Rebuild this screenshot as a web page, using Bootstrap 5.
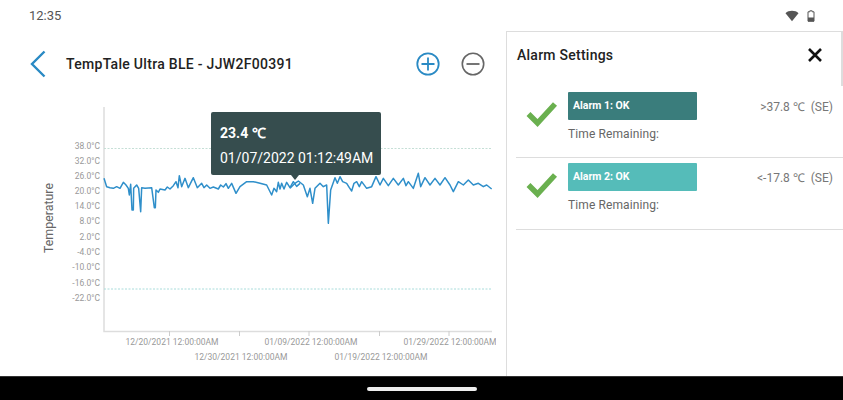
<!DOCTYPE html>
<html lang="en">
<head>
<meta charset="utf-8">
<title>TempTale Ultra BLE</title>
<link href="https://cdn.jsdelivr.net/npm/bootstrap@5.3.0/dist/css/bootstrap.min.css" rel="stylesheet">
<style>
html,body{margin:0;height:400px;overflow:hidden;background:#fff}
body{font-family:Roboto,"Liberation Sans",sans-serif;color:#222}
.screen{width:843px;height:400px}
.statusbar{height:31px;padding:0 28px 0 29px;color:#555;font-size:13px;flex:none}
.statusbar svg{display:block}
.mainrow{height:345px;flex:none}
.chartpane{width:506px;flex:none}
.charthead{height:66px;padding-left:29px;padding-right:21px;flex:none}
.devtitle{font-size:14px;font-weight:500;margin-left:19px;margin-top:1px;color:#222;letter-spacing:.3px}
.zoomset{gap:21px;margin-bottom:1px}
.chartbox{height:279px;position:relative}
.chartbox svg{display:block}
.axisnum{font-size:8.5px;fill:#999;font-family:Roboto,sans-serif}
.axistitle{font-size:12.4px;fill:#666;font-family:Roboto,sans-serif}
.tip{position:absolute;left:211px;top:15px;width:170px;height:63px;background:#364d4e;color:#fff;border-radius:2px;padding:13px 0 0 9px;font-size:14px;line-height:16px;white-space:nowrap}
.tip::after{content:"";position:absolute;left:80px;top:63px;border:4px solid transparent;border-top:5px solid #364d4e;border-bottom:0}
.tipval{font-weight:700;margin-bottom:9px}
.alarmpane{width:337px;flex:none;border-left:1px solid #ddd;border-top:1px solid #ddd;position:relative}
.alarmhead{height:46px;padding:0 20px 0 10px}
.alarmtitle{font-size:14px;font-weight:500;color:#222;letter-spacing:.25px}
.alarmlist{margin-left:9px}
.alarmrow{height:72px;border-bottom:1px solid #ddd;padding:5px 10px 0 10px}
.alarmfirst{height:80px;padding-top:14px}
.alarmtick{width:32px;margin-right:10px;flex:none}
.tickmark{display:block;margin-top:7px}
.alarmbody{width:129px;flex:none}
.alarmtag{height:28px;width:129px;color:#fff;font-size:10.5px;font-weight:700;padding-left:5px;border-radius:1px}
.tagdark{background:#3a7d7c}
.taglight{background:#55bcb9}
.remain{font-size:12px;color:#666;margin-top:7px;line-height:14px;letter-spacing:.1px}
.limit{font-size:12px;color:#777;line-height:28px;margin-left:auto;margin-top:1px;white-space:pre}
.thumbbar{position:absolute;right:0;top:0;width:2px;height:54px;background:#ddd}
.navstrip{height:24px;background:#000;flex:none;border-top:1px solid #333}
.navpill{width:110px;height:4px;background:#eee;border-radius:2px}
</style>
</head>
<body>
<div class="screen d-flex flex-column">
  <div class="statusbar d-flex align-items-center justify-content-between">
    <span>12:35</span>
    <div class="d-flex align-items-center gap-2">
      <svg width="14" height="12" viewBox="0 0 14 12"><path d="M0.5 3.2C2.2 1.6 4.5.8 7 .8s4.8.8 6.5 2.4L7 11.2z" fill="#555"/></svg>
      <svg width="8" height="12" viewBox="0 0 8 12"><path d="M2.8.8h2.4v1H7v9.4H1V1.800h1.800z" fill="none" stroke="#555" stroke-width="1"/><rect x="1" y="7.500" width="6" height="4" fill="#555"/></svg>
    </div>
  </div>
  <div class="mainrow d-flex">
    <div class="chartpane d-flex flex-column">
      <div class="charthead d-flex align-items-center">
        <svg width="18" height="28" viewBox="0 0 18 28"><path d="M15.500 1.500 3 14l12.500 12.500" fill="none" stroke="#2a8ac4" stroke-width="2.400"/></svg>
        <span class="devtitle">TempTale Ultra BLE - JJW2F00391</span>
        <div class="ms-auto d-flex zoomset align-items-center">
          <svg width="24" height="24" viewBox="0 0 24 24"><circle cx="12" cy="12" r="10.700" fill="none" stroke="#2a8ac4" stroke-width="1.800"/><path d="M5.500 12h13M12 5.500v13" stroke="#2a8ac4" stroke-width="1.800"/></svg>
          <svg width="24" height="24" viewBox="0 0 24 24"><circle cx="12" cy="12" r="10.700" fill="none" stroke="#666" stroke-width="1.600"/><path d="M5.500 12h13" stroke="#666" stroke-width="1.800"/></svg>
        </div>
      </div>
      <div class="chartbox">
        <svg width="506" height="279" viewBox="0 97 506 279">
          <text class="axistitle" transform="translate(53 218) rotate(-90)" text-anchor="middle">Temperature</text>
          <g text-anchor="end">
            <text class="axisnum" x="100" y="149">38.0°C</text>
            <text class="axisnum" x="100" y="164">32.0°C</text>
            <text class="axisnum" x="100" y="179">26.0°C</text>
            <text class="axisnum" x="100" y="194">20.0°C</text>
            <text class="axisnum" x="100" y="209">14.0°C</text>
            <text class="axisnum" x="100" y="224">8.0°C</text>
            <text class="axisnum" x="100" y="240">2.0°C</text>
            <text class="axisnum" x="100" y="255">-4.0°C</text>
            <text class="axisnum" x="100" y="270">-10.0°C</text>
            <text class="axisnum" x="100" y="286">-16.0°C</text>
            <text class="axisnum" x="100" y="301">-22.0°C</text>
          </g>
          <path d="M104 107V331.500H492" fill="none" stroke="#ddd" stroke-width="1.500"/>
          <path d="M169.500 331v5M239.500 331v5M309 331v5M379.500 331v5M449 331v5" stroke="#ccc"/>
          <path d="M104 148.500H492" stroke="#c5dfd6" stroke-dasharray="2 1.500"/>
          <path d="M104 289H492" stroke="#a9dcdb" stroke-dasharray="2 1.500"/>
          <g text-anchor="middle">
            <text class="axisnum" x="172" y="345">12/20/2021 12:00:00AM</text>
            <text class="axisnum" x="241" y="360">12/30/2021 12:00:00AM</text>
            <text class="axisnum" x="311" y="345">01/09/2022 12:00:00AM</text>
            <text class="axisnum" x="381" y="360">01/19/2022 12:00:00AM</text>
          </g>
          <svg x="400" y="330" width="96" height="20" viewBox="400 330 96 20"><text class="axisnum" x="450" y="345" text-anchor="middle">01/29/2022 12:00:00AM</text></svg>
          <g transform="translate(90 165) scale(.33333)" fill="none" stroke="#2f8fca" stroke-linejoin="round">
            <polyline vector-effect="non-scaling-stroke" stroke-width="1.500" points="42,40 50,65 60,68 70,70 80,65 90,70 100,52 108,60 115,70 118,90 122,58 126,135 130,135 131,70 140,60 146,70 152,140 155,68 165,70 185,68 193,128 196,128 198,75 205,82 210,72 225,75 232,66 240,72 250,62 258,50 264,68 268,32 275,65 285,40 295,68 310,38 322,68 335,55 342,68 350,60 360,70 370,66 385,72 392,60 400,66 408,56 415,70 425,55 438,85 450,65 470,50 490,50 510,55 530,60 545,90 552,70 560,80 565,52 570,72 575,55 582,72 590,52 600,68 610,50 620,64 630,55"/>
          </g>
          <g transform="translate(290 165) scale(.33333)" fill="none" stroke="#2f8fca" stroke-linejoin="round">
            <polyline vector-effect="non-scaling-stroke" stroke-width="1.500" points="0,70 15,55 25,48 40,60 52,95 60,70 68,115 75,70 90,55 100,65 110,60 115,175 122,75 135,38 142,55 150,35 158,50 170,55 178,68 185,78 192,55 200,50 208,65 215,50 230,70 245,65 258,35 270,60 280,40 295,62 310,40 325,60 340,40 348,62 355,50 370,70 385,25 392,65 405,38 420,60 435,40 450,60 465,38 480,60 490,80 505,50 520,60 535,45 550,60 565,55 580,65 590,60 605,72"/>
          </g>
        </svg>
        <div class="tip">
          <div class="tipval">23.4 ℃</div>
          <div>01/07/2022 01:12:49AM</div>
        </div>
      </div>
    </div>
    <div class="alarmpane">
      <div class="thumbbar"></div>
      <div class="alarmhead d-flex align-items-center justify-content-between">
        <span class="alarmtitle">Alarm Settings</span>
        <svg width="16" height="16" viewBox="0 0 16 16"><path d="M2 2l12 12M14 2 2 14" stroke="#111" stroke-width="2.600"/></svg>
      </div>
      <div class="alarmlist">
        <div class="alarmrow alarmfirst d-flex">
          <div class="alarmtick">
            <svg width="32" height="28" viewBox="0 0 32 28" class="tickmark"><path d="M2.500 15 11.500 24 29 5" fill="none" stroke="#6ab04f" stroke-width="5.500"/></svg>
          </div>
          <div class="alarmbody">
            <div class="alarmtag tagdark d-flex align-items-center">Alarm 1: OK</div>
            <div class="remain">Time Remaining:</div>
          </div>
          <div class="limit">&gt;37.8 ℃  (SE)</div>
        </div>
        <div class="alarmrow d-flex">
          <div class="alarmtick">
            <svg width="32" height="28" viewBox="0 0 32 28" class="tickmark"><path d="M2.500 15 11.500 24 29 5" fill="none" stroke="#6ab04f" stroke-width="5.500"/></svg>
          </div>
          <div class="alarmbody">
            <div class="alarmtag taglight d-flex align-items-center">Alarm 2: OK</div>
            <div class="remain">Time Remaining:</div>
          </div>
          <div class="limit">&lt;-17.8 ℃  (SE)</div>
        </div>
      </div>
    </div>
  </div>
  <div class="navstrip d-flex align-items-center justify-content-center">
    <div class="navpill"></div>
  </div>
</div>
<script src="https://cdn.jsdelivr.net/npm/bootstrap@5.3.0/dist/js/bootstrap.bundle.min.js"></script>
</body>
</html>
